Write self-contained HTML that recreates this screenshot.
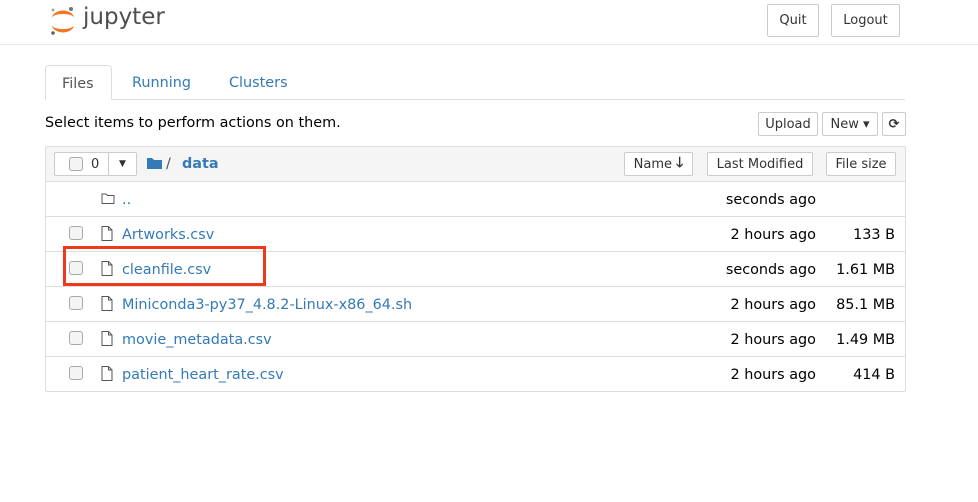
<!DOCTYPE html>
<html><head><style>
*{box-sizing:border-box}
body{margin:0;width:978px;height:502px;background:#fff;font-family:"DejaVu Sans","Liberation Sans",sans-serif;font-size:13px;color:#000;position:relative;overflow:hidden}
.abs{position:absolute}
.btn{position:absolute;border:1px solid #ccc;background:#fff;border-radius:2px;color:#333;font-size:13px;display:flex;align-items:center;justify-content:center}
a{color:#337ab7;text-decoration:none}
.row{position:absolute;left:45px;width:860px;height:35px;border-top:1px solid #ddd}
.cb{position:absolute;left:24px;top:9px;width:14px;height:14px;border:1px solid #aaa;border-radius:3px;background:#f4f4f4}
.ic{position:absolute;left:56px;top:9px}
.nm{position:absolute;left:77px;top:10px;font-size:14.4px}
.tm{position:absolute;right:89px;top:10px;font-size:14.4px}
.sz{position:absolute;right:10px;top:10px;font-size:14.4px}
</style></head><body>
<svg class="abs" style="left:49px;top:5px" width="28" height="32" viewBox="0 0 28 32">
<path d="M3 13 A11 7.5 0 0 1 25 13 A11 4 0 0 0 3 13Z" fill="#f37726"/>
<path d="M3 20 A11 7.5 0 0 0 25 20 A11 4 0 0 1 3 20Z" fill="#f37726"/>
<circle cx="22" cy="4" r="2" fill="#767677"/><circle cx="4" cy="5" r="1.4" fill="#9e9e9e"/><circle cx="4" cy="28" r="1.8" fill="#616262"/>
</svg>
<div class="abs" style="left:83px;top:4px;font-size:23px;color:#4e4e4e">jupyter</div>
<div class="btn" style="left:767px;top:4px;width:52px;height:33px">Quit</div>
<div class="btn" style="left:831px;top:4px;width:69px;height:33px">Logout</div>
<div class="abs" style="left:0;top:44px;width:978px;height:1px;background:#e7e7e7"></div>
<div class="abs" style="left:45px;top:99px;width:860px;height:1px;background:#ddd"></div>
<div class="abs" style="left:45px;top:65px;width:67px;height:35px;border:1px solid #ddd;border-bottom-color:#fff;border-radius:4px 4px 0 0;background:#fff;color:#555;font-size:14.4px;padding:10px 0 0 16px">Files</div>
<a class="abs" style="left:132px;top:75px;font-size:14.4px">Running</a>
<a class="abs" style="left:229px;top:75px;font-size:14.4px">Clusters</a>
<div class="abs" style="left:45px;top:115px;font-size:14.4px">Select items to perform actions on them.</div>
<div class="btn" style="left:758px;top:112px;width:60px;height:24px">Upload</div>
<div class="btn" style="left:822px;top:112px;width:56px;height:24px">New ▾</div>
<div class="btn" style="left:882px;top:112px;width:24px;height:24px;font-weight:bold">⟳</div>
<div class="abs" style="left:45px;top:146px;width:861px;height:246px;border:1px solid #ddd;border-radius:2px"></div>
<div class="abs" style="left:46px;top:147px;width:859px;height:34px;background:#f5f5f5"></div>
<div class="btn" style="left:54px;top:152px;width:55px;height:24px;justify-content:flex-start;padding-left:14px"><span style="display:inline-block;width:14px;height:14px;border:1px solid #aaa;border-radius:3px;background:#f4f4f4;margin-right:8px"></span>0</div>
<div class="btn" style="left:108px;top:152px;width:29px;height:24px;font-size:9px">▼</div>
<svg class="abs" style="left:147px;top:157px" width="15" height="12" viewBox="0 0 15 12"><path d="M0 1h5l2 2h8v9H0z" fill="#337ab7"/></svg>
<div class="abs" style="left:166px;top:156px;font-size:14.4px;color:#555">/</div>
<a class="abs" style="left:182px;top:156px;font-size:14.4px;font-weight:bold">data</a>
<div class="btn" style="left:624px;top:152px;width:69px;height:24px">Name <b style="margin-left:4px;font-size:14px">🡓</b></div>
<div class="btn" style="left:707px;top:152px;width:106px;height:24px">Last Modified</div>
<div class="btn" style="left:826px;top:152px;width:70px;height:24px">File size</div>

<div class="row" style="top:181px"><svg class="ic" width="14" height="14" viewBox="0 0 14 14"><path d="M1 3h4l1.5 1.5H13v8H1z" fill="none" stroke="#555"/></svg><a class="nm">..</a><span class="tm">seconds ago</span></div>
<div class="row" style="top:216px"><div class="cb"></div><svg class="ic" width="12" height="15" viewBox="0 0 12 15"><path d="M1 .5h6.5l3.5 3.5v10.5H1z M7.5 .5v3.5h3.5" fill="none" stroke="#555"/></svg><a class="nm">Artworks.csv</a><span class="tm">2 hours ago</span><span class="sz">133 B</span></div>
<div class="row" style="top:251px"><div class="cb"></div><svg class="ic" width="12" height="15" viewBox="0 0 12 15"><path d="M1 .5h6.5l3.5 3.5v10.5H1z M7.5 .5v3.5h3.5" fill="none" stroke="#555"/></svg><a class="nm">cleanfile.csv</a><span class="tm">seconds ago</span><span class="sz">1.61 MB</span></div>
<div class="row" style="top:286px"><div class="cb"></div><svg class="ic" width="12" height="15" viewBox="0 0 12 15"><path d="M1 .5h6.5l3.5 3.5v10.5H1z M7.5 .5v3.5h3.5" fill="none" stroke="#555"/></svg><a class="nm">Miniconda3-py37_4.8.2-Linux-x86_64.sh</a><span class="tm">2 hours ago</span><span class="sz">85.1 MB</span></div>
<div class="row" style="top:321px"><div class="cb"></div><svg class="ic" width="12" height="15" viewBox="0 0 12 15"><path d="M1 .5h6.5l3.5 3.5v10.5H1z M7.5 .5v3.5h3.5" fill="none" stroke="#555"/></svg><a class="nm">movie_metadata.csv</a><span class="tm">2 hours ago</span><span class="sz">1.49 MB</span></div>
<div class="row" style="top:356px"><div class="cb"></div><svg class="ic" width="12" height="15" viewBox="0 0 12 15"><path d="M1 .5h6.5l3.5 3.5v10.5H1z M7.5 .5v3.5h3.5" fill="none" stroke="#555"/></svg><a class="nm">patient_heart_rate.csv</a><span class="tm">2 hours ago</span><span class="sz">414 B</span></div>
<div class="abs" style="left:63px;top:246px;width:203px;height:40px;border:3px solid #f0391a"></div>
</body></html>
